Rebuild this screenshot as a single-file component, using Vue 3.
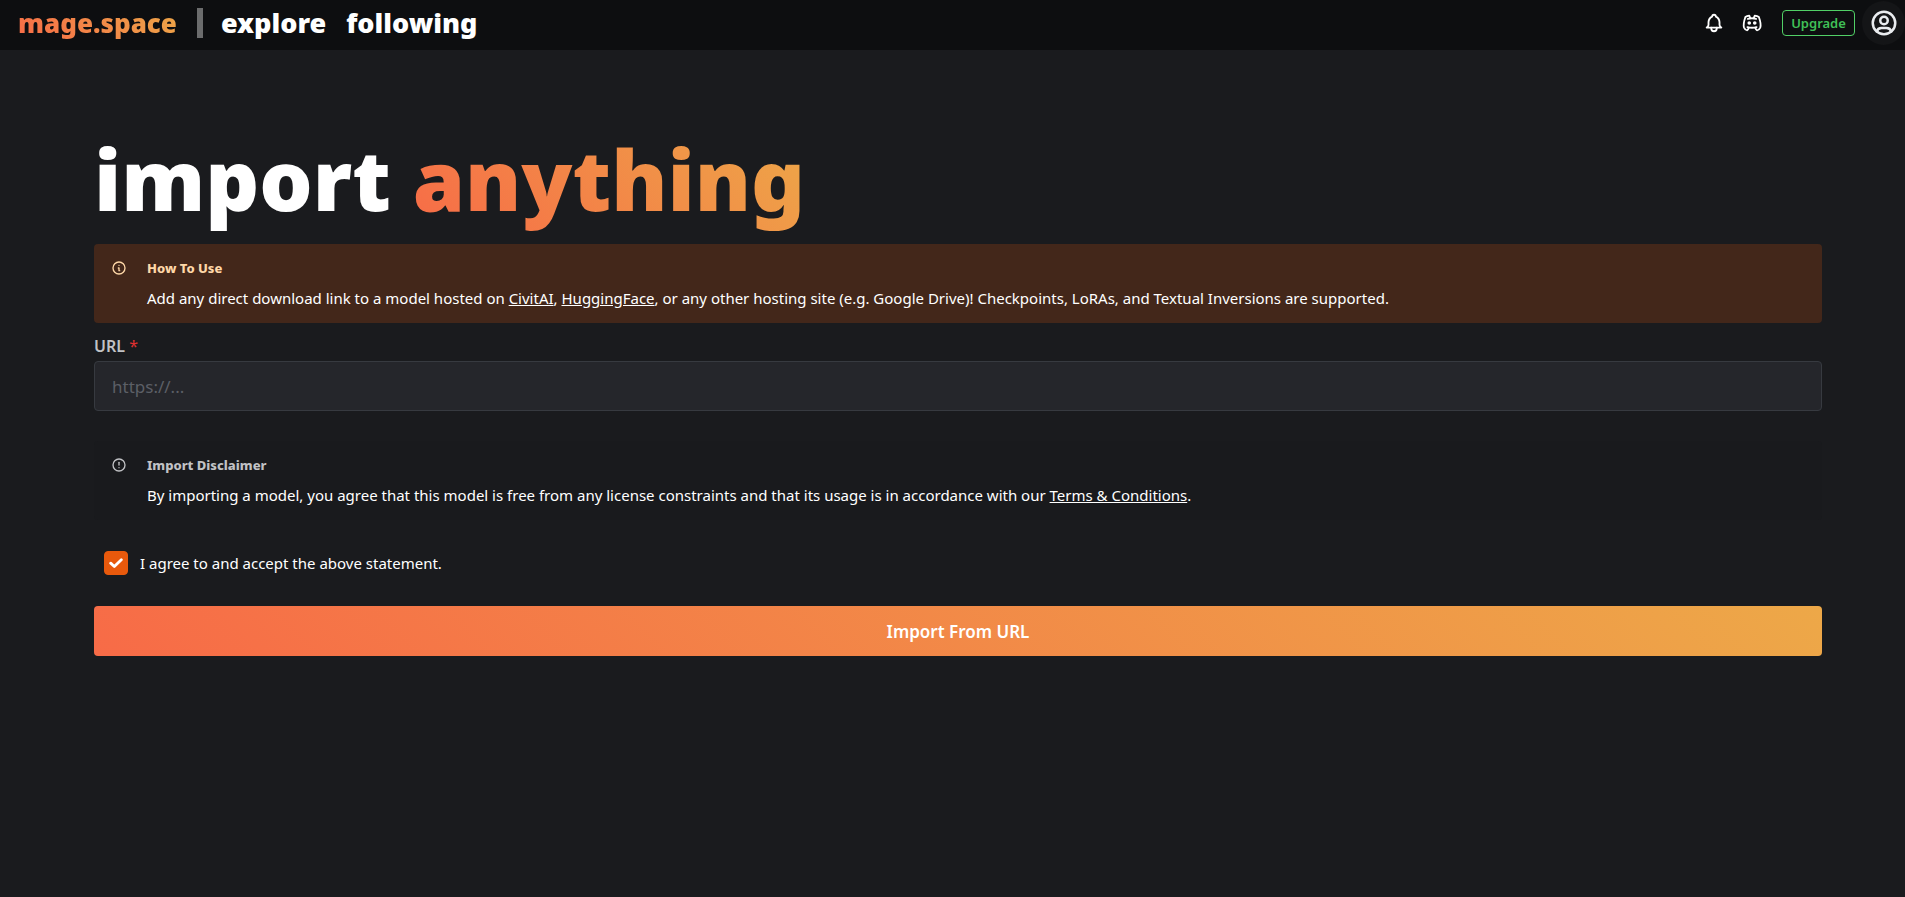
<template>
  <div class="page">
    <header class="topbar">
      <nav class="topbar-nav">
        <a href="#" class="brand">mage.space</a>
        <span class="divider" aria-hidden="true"></span>
        <a v-for="link in links" :key="link" href="#" class="nav-link">{{ link }}</a>
      </nav>

      <div class="topbar-actions">
        <button type="button" class="icon-btn" aria-label="Notifications">
          <svg viewBox="0 0 24 24" width="22" height="22" class="stroke-icon">
            <path d="M10 5a2 2 0 0 1 4 0a7 7 0 0 1 4 6v3a4 4 0 0 0 2 3h-16a4 4 0 0 0 2 -3v-3a7 7 0 0 1 4 -6" />
            <path d="M9 17v1a3 3 0 0 0 6 0v-1" />
          </svg>
        </button>
        <a href="#" class="icon-btn" aria-label="Discord">
          <svg viewBox="0 0 24 24" width="22" height="22" class="stroke-icon">
            <circle cx="9" cy="12" r="1" />
            <circle cx="15" cy="12" r="1" />
            <path d="M7.500 7.500c3.500 -1 5.500 -1 9 0" />
            <path d="M7 16.500c3.500 1 6.500 1 10 0" />
            <path d="M15.500 17c0 1 1.500 3 2 3c1.500 0 2.833 -1.667 3.500 -3c.667 -1.667 .5 -5.833 -1.500 -11.500c-1.457 -1.015 -3 -1.340 -4.500 -1.500l-1 2.500" />
            <path d="M8.500 17c0 1 -1.356 3 -1.832 3c-1.429 0 -2.698 -1.667 -3.333 -3c-.635 -1.667 -.476 -5.833 1.428 -11.500c1.388 -1.015 2.782 -1.340 4.237 -1.500l1 2.500" />
          </svg>
        </a>
        <button type="button" class="upgrade-btn">Upgrade</button>
        <button type="button" class="avatar-btn" aria-label="Account">
          <svg viewBox="0 0 24 24" width="30" height="30" class="stroke-icon">
            <circle cx="12" cy="12" r="9" />
            <circle cx="12" cy="10" r="3" />
            <path d="M6.168 18.849a4 4 0 0 1 3.832 -2.849h4a4 4 0 0 1 3.834 2.855" />
          </svg>
        </button>
      </div>
    </header>

    <main class="content">
      <h1>import <span class="gradient-text">anything</span></h1>

      <section class="alert alert-orange">
        <svg viewBox="0 0 24 24" width="16" height="16" class="stroke-icon alert-icon">
          <circle cx="12" cy="12" r="9" />
          <path d="M12 8h.01" />
          <path d="M11 12h1v4h1" />
        </svg>
        <div>
          <h2>How To Use</h2>
          <p>
            Add any direct download link to a model hosted on <a href="#">CivitAI</a>,
            <a href="#">HuggingFace</a>, or any other hosting site (e.g. Google Drive)!
            Checkpoints, LoRAs, and Textual Inversions are supported.
          </p>
        </div>
      </section>

      <form @submit.prevent>
        <label for="model-url" class="field-label">URL <span class="required">*</span></label>
        <input id="model-url" v-model="url" type="text" class="field" placeholder="https://..." required />

        <section class="alert alert-dark">
          <svg viewBox="0 0 24 24" width="16" height="16" class="stroke-icon alert-icon">
            <circle cx="12" cy="12" r="9" />
            <path d="M12 8v4" />
            <path d="M12 16h.01" />
          </svg>
          <div>
            <h2>Import Disclaimer</h2>
            <p>
              By importing a model, you agree that this model is free from any license constraints
              and that its usage is in accordance with our <a href="#">Terms &amp; Conditions</a>.
            </p>
          </div>
        </section>

        <div class="agree">
          <span class="checkbox">
            <input id="agree" v-model="agreed" type="checkbox" />
            <svg v-if="agreed" viewBox="0 0 10 7" width="14" height="10" aria-hidden="true">
              <path d="M1.200 3.600L3.800 6L8.800 1.100" />
            </svg>
          </span>
          <label for="agree">I agree to and accept the above statement.</label>
        </div>

        <button type="submit" class="submit-btn">Import From URL</button>
      </form>
    </main>
  </div>
</template>

<script setup>
import { ref } from 'vue'

const links = ['explore', 'following']

const url = ref('')
const agreed = ref(true)
</script>

<style>
body {
  background: #1a1b1e;
}
</style>

<style scoped>
.page {
  min-height: 100vh;
  color: #fff;
  background: #1a1b1e;
  font-family: 'Noto Sans', 'Open Sans', sans-serif;
  font-size: 15px;
  line-height: 24px;
}

a {
  color: inherit;
}

button,
input {
  font-family: inherit;
}

.stroke-icon {
  display: block;
  fill: none;
  stroke: currentColor;
  stroke-width: 2;
  stroke-linecap: round;
  stroke-linejoin: round;
}

.topbar {
  display: flex;
  align-items: center;
  justify-content: space-between;
  height: 50px;
  padding-left: 18px;
  background: #0d0e10;
}

.topbar-nav {
  display: flex;
  align-items: center;
  height: 46px;
  margin-bottom: 4px;
  font-size: 26px;
  font-weight: 900;
}

.topbar-nav a {
  text-decoration: none;
  line-height: 36px;
}

.brand,
.gradient-text {
  color: transparent;
  background: linear-gradient(45deg, #f76b47, #eda848);
  background-clip: text;
}

.divider {
  width: 6px;
  height: 30px;
  margin: 0 18px 0 20px;
  background: #6b6c6d;
}

.nav-link {
  font-size: 27px;
}

.nav-link + .nav-link {
  margin-left: 20px;
}

.topbar-actions {
  display: flex;
  align-items: center;
  height: 46px;
  margin-bottom: 4px;
}

.icon-btn {
  display: grid;
  place-items: center;
  width: 38px;
  height: 30px;
  padding: 0;
  border: 0;
  color: #fff;
  background: transparent;
}

.upgrade-btn {
  width: 73px;
  height: 26px;
  margin: 0 7px 0 11px;
  padding: 0;
  border: 1px solid #51cf66;
  border-radius: 4px;
  color: #40c057;
  background: transparent;
  font-size: 13px;
  font-weight: 600;
}

.avatar-btn {
  display: grid;
  place-items: center;
  width: 43px;
  height: 44px;
  padding: 0;
  border: 0;
  border-radius: 50%;
  color: #e9ecef;
  background: #141517;
}

.content {
  padding: 74px 83px 40px 94px;
}

h1 {
  margin: 0 0 10px;
  font-size: 84px;
  font-weight: 900;
  line-height: 110px;
}

.gradient-text {
  display: inline-block;
}

.alert {
  display: flex;
  gap: 20px;
  padding: 12px 17px 13px;
  border-radius: 4px;
}

.alert-icon {
  flex: none;
  margin-top: 4px;
}

.alert h2 {
  margin: 0 0 6px;
  font-size: 13px;
  font-weight: 800;
  line-height: 24px;
}

.alert p {
  margin: 0;
}

.alert-orange {
  background: #43271a;
}

.alert-orange .alert-icon,
.alert-orange h2 {
  color: #ffd8a8;
}

.alert-dark {
  margin: 30px 0;
  background: #191a1d;
}

.alert-dark .alert-icon,
.alert-dark h2 {
  color: #c1c2c5;
}

.field-label {
  display: block;
  padding: 11px 0 3px;
  color: #c1c2c5;
  font-size: 16px;
  font-weight: 600;
  line-height: 24px;
}

.required {
  color: #e03131;
  font-weight: 400;
}

.field {
  display: block;
  box-sizing: border-box;
  width: 100%;
  height: 50px;
  padding: 0 17px;
  border: 1px solid #373a40;
  border-radius: 4px;
  color: #c1c2c5;
  background: #25262b;
  font-size: 17px;
}

.field::placeholder {
  color: #5c5f66;
}

.agree {
  display: flex;
  align-items: center;
  gap: 12px;
  padding: 1px 0 0 10px;
}

.checkbox {
  display: grid;
  place-items: center;
  width: 24px;
  height: 24px;
}

.checkbox input,
.checkbox svg {
  grid-area: 1 / 1;
}

.checkbox input {
  width: 24px;
  height: 24px;
  margin: 0;
  border: 1px solid #373a40;
  border-radius: 4px;
  background: #25262b;
  appearance: none;
}

.checkbox input:checked {
  border-color: #e8590c;
  background: #e8590c;
}

.checkbox svg {
  fill: none;
  stroke: #fff;
  stroke-width: 2;
  stroke-linecap: round;
  stroke-linejoin: round;
  pointer-events: none;
}

.submit-btn {
  display: block;
  width: 100%;
  height: 50px;
  margin-top: 31px;
  border: 0;
  border-radius: 4px;
  color: #fff;
  background: linear-gradient(45deg, #f76b47, #eda848);
  font-size: 17px;
  font-weight: 600;
}

button,
.checkbox input,
.agree label {
  cursor: pointer;
}
</style>
